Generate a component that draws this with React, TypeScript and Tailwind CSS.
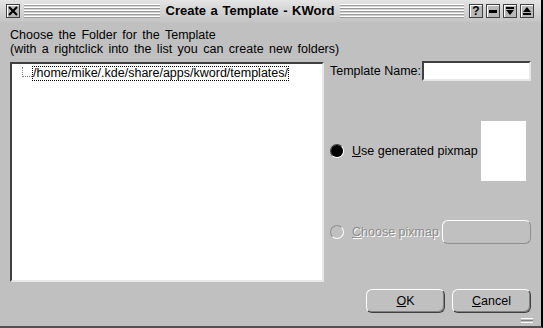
import React from 'react';

const Stripes = ({ className }: { className: string }) => (
  <div className={`flex flex-col gap-[1px] ${className}`}>
    {[0, 1, 2, 3, 4].map((i) => (
      <div key={i} className="h-[1px] bg-white border-b border-[#9a9a9a] box-content" />
    ))}
  </div>
);

const TitleButton = ({ children }: { children: React.ReactNode }) => (
  <div className="w-[14px] h-[14px] border border-[#404040] bg-[#b8b8b8] flex items-center justify-center shadow-[inset_1px_1px_0_#fff]">
    {children}
  </div>
);

const Radio = ({ checked, disabled }: { checked?: boolean; disabled?: boolean }) => (
  <div
    className={`w-[14px] h-[14px] shrink-0 rounded-full border ${
      disabled ? 'border-t-[#909090] border-l-[#909090] border-b-white border-r-white' : 'border-t-[#404040] border-l-[#404040] border-b-white border-r-white'
    } flex items-center justify-center`}
  >
    {checked && <div className="w-[12px] h-[12px] rounded-full bg-black" />}
  </div>
);

const Button = ({ children, className = '' }: { children?: React.ReactNode; className?: string }) => (
  <div
    className={`h-[24px] shrink-0 rounded-[6px] border border-t-white border-l-white border-b-[#404040] border-r-[#404040] bg-[#c0c0c0] shadow-[inset_-1px_-1px_0_#808080] flex items-center justify-center ${className}`}
  >
    {children}
  </div>
);

export default function App() {
  return (
    <div className="w-[543px] h-[328px] bg-[#c0c0c0] relative overflow-hidden font-['Liberation_Sans',_Arial,_sans-serif] text-[12.5px] text-black border-r-2 border-b-2 border-r-black border-b-[#505050]">
      {/* title bar */}
      <div className="h-[22px] flex items-center pl-[6px] pr-[7px] gap-[3px] bg-gradient-to-b from-[#e4e4e4] to-[#c4c4c4]">
        <TitleButton>
          <svg width="10" height="10" viewBox="0 0 10 10">
            <path d="M1 1 L9 9 M9 1 L1 9" stroke="black" strokeWidth="2" />
          </svg>
        </TitleButton>
        <Stripes className="w-[136px] ml-[1px]" />
        <div className="flex-1 text-center font-bold text-[13px] [word-spacing:1px] whitespace-nowrap px-[2px]">Create a Template - KWord</div>
        <Stripes className="w-[124px]" />
        <div className="flex gap-[3px] ml-[2px]">
          <TitleButton>
            <span className="font-bold text-[12px] leading-none">?</span>
          </TitleButton>
          <TitleButton>
            <div className="w-[8px] h-[3px] bg-black" />
          </TitleButton>
          <TitleButton>
            <svg width="10" height="10" viewBox="0 0 10 10">
              <rect x="1" y="1" width="8" height="2" fill="black" />
              <path d="M1 4 L9 4 L5 9 Z" fill="black" />
            </svg>
          </TitleButton>
          <TitleButton>
            <svg width="10" height="10" viewBox="0 0 10 10">
              <path d="M1 6 L9 6 L5 1 Z" fill="black" />
              <rect x="1" y="7" width="8" height="2" fill="black" />
            </svg>
          </TitleButton>
        </div>
      </div>

      {/* body */}
      <div className="px-[10px] pt-[6px]">
        <div className="leading-[14px] [word-spacing:2px]">
          <div>Choose the Folder for the Template</div>
          <div>(with a rightclick into the list you can create new folders)</div>
        </div>

        <div className="flex mt-[6px] gap-[6px]">
          <div className="w-[314px] h-[220px] shrink-0 bg-white border-2 border-t-[#404040] border-l-[#404040] border-b-[#e8e8e8] border-r-[#e8e8e8] pt-[2px] pl-[10px]">
            <div className="flex items-start">
              <div className="w-[10px] h-[10px] border-l border-b border-dotted border-[#808080] mt-[1px]" />
              <div className="border border-dotted border-black leading-[13px]">
                /home/mike/.kde/share/apps/kword/templates/
              </div>
            </div>
          </div>

          <div className="w-[202px] flex flex-col">
            <div className="flex items-center -mt-[1px]">
              <span className="whitespace-nowrap">Template Name:</span>
              <div className="ml-auto w-[109px] h-[20px] shrink-0 bg-white border-2 border-t-[#404040] border-l-[#404040] border-b-[#e8e8e8] border-r-[#e8e8e8]" />
            </div>

            <div className="flex items-center mt-[40px]">
              <Radio checked />
              <span className="ml-[8px] whitespace-nowrap">
                <span className="underline">U</span>se generated pixmap
              </span>
              <div className="ml-auto w-[45px] h-[60px] shrink-0 bg-white mr-[5px]" />
            </div>

            <div className="flex items-center mt-[39px]">
              <Radio disabled />
              <span className="ml-[8px] whitespace-nowrap text-[#8c8c8c] [text-shadow:1px_1px_0_#fff]">
                <span className="underline">C</span>hoose pixmap
              </span>
              <Button className="ml-auto w-[89px] border-t-[#f0f0f0] border-l-[#f0f0f0] border-b-[#909090] border-r-[#909090] shadow-none" />
            </div>
          </div>
        </div>

        <div className="flex justify-end gap-[7px] mt-[7px]">
          <Button className="w-[79px]">
            <span>
              <span className="underline">O</span>K
            </span>
          </Button>
          <Button className="w-[79px]">
            <span>
              <span className="underline">C</span>ancel
            </span>
          </Button>
        </div>
      </div>

      {/* resize grip */}
      <div className="absolute right-[8px] bottom-[3px] flex flex-col gap-[1px]">
        <div className="w-[12px] h-[1px] bg-white" />
        <div className="w-[12px] h-[1px] bg-[#808080]" />
        <div className="w-[12px] h-[1px] bg-white" />
      </div>
    </div>
  );
}
